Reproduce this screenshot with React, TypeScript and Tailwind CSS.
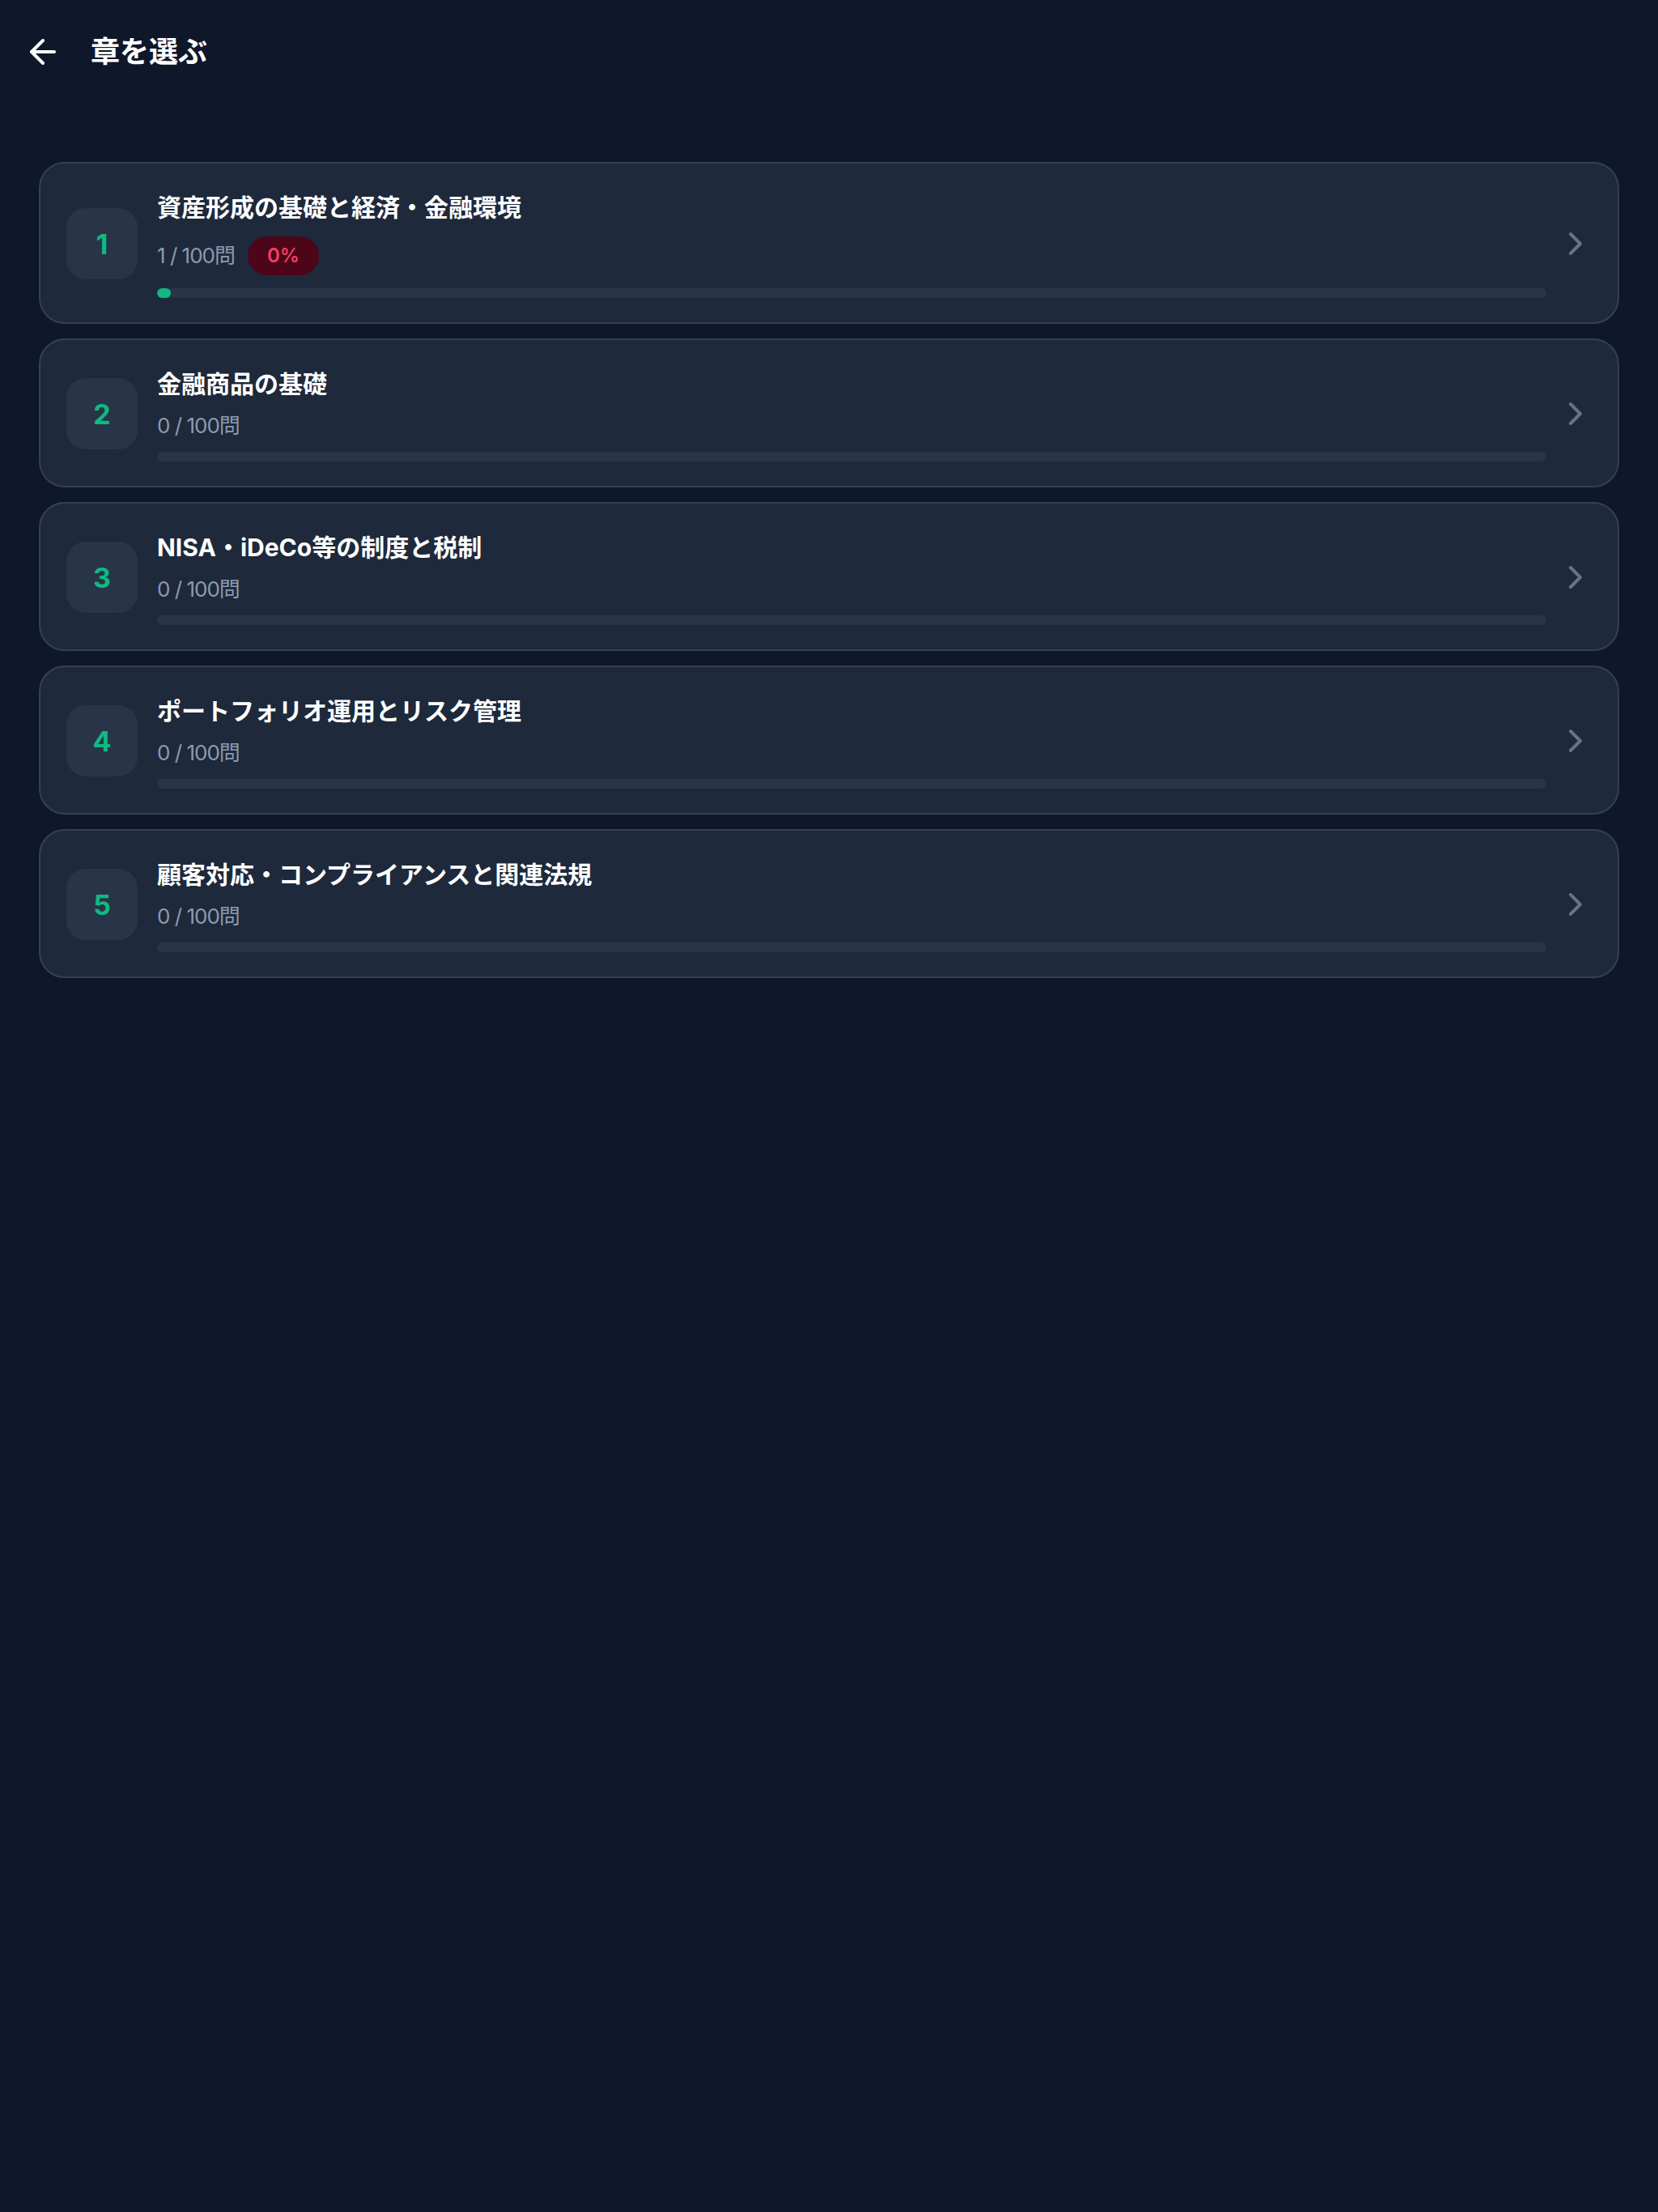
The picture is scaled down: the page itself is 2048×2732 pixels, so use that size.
import React from "react";
import { ArrowLeft, ChevronRight } from "lucide-react";

type Chapter = {
  no: number;
  title: string;
  done: number;
  total: number;
  rate?: number;
};

const chapters: Chapter[] = [
  { no: 1, title: "資産形成の基礎と経済・金融環境", done: 1, total: 100, rate: 0 },
  { no: 2, title: "金融商品の基礎", done: 0, total: 100 },
  { no: 3, title: "NISA・iDeCo等の制度と税制", done: 0, total: 100 },
  { no: 4, title: "ポートフォリオ運用とリスク管理", done: 0, total: 100 },
  { no: 5, title: "顧客対応・コンプライアンスと関連法規", done: 0, total: 100 },
];

function ChapterCard({ chapter }: { chapter: Chapter }) {
  const progress = (chapter.done / chapter.total) * 100;

  return (
    <button className="flex w-full items-center rounded-[32px] border-2 border-[#344155] bg-[#1e293b] pt-[32px] pb-[30px] pl-[32px] pr-[28px] text-left">
      {/* Number */}
      <div className="flex h-[88px] w-[88px] shrink-0 items-center justify-center rounded-[24px] bg-[#283548] text-[34px] font-bold text-[#10b981]">
        {chapter.no}
      </div>

      {/* Title, count, bar */}
      <div className="ml-[24px] mr-[12px] min-w-0 flex-1">
        <h3 className="text-[30px] font-bold leading-[44px] text-white">{chapter.title}</h3>
        <div className="mt-[14px] flex items-center gap-[16px]">
          <span className="text-[26px] leading-[32px] tracking-[-1px] text-[#8b9ab0]">
            {chapter.done} / {chapter.total}問
          </span>
          {chapter.rate !== undefined && (
            <span className="rounded-full bg-[#4c0519] px-[24px] py-[8px] text-[24px] font-semibold leading-[32px] text-[#f43f5e]">
              {chapter.rate}%
            </span>
          )}
        </div>
        <div className="mt-[16px] h-[12px] w-full overflow-hidden rounded-full bg-[#283548]">
          <div className="h-full rounded-full bg-[#10b981]" style={{ width: `${progress}%` }} />
        </div>
      </div>

      <ChevronRight className="h-[48px] w-[48px] shrink-0 text-[#64748b]" strokeWidth={2} />
    </button>
  );
}

export default function App() {
  return (
    <div className="min-h-screen bg-[#0f172a] font-['Inter','Noto_Sans_CJK_JP',sans-serif] text-white">
      {/* Header */}
      <header className="flex h-[128px] items-center gap-[35px] pl-[29px]">
        <button className="flex items-center justify-center text-white">
          <ArrowLeft className="h-[48px] w-[48px]" strokeWidth={2} />
        </button>
        <h1 className="text-[36px] font-bold leading-[48px]">章を選ぶ</h1>
      </header>

      {/* Chapter list */}
      <main className="flex flex-col gap-[18px] px-[48px] pt-[72px]">
        {chapters.map((c) => (
          <ChapterCard key={c.no} chapter={c} />
        ))}
      </main>
    </div>
  );
}
